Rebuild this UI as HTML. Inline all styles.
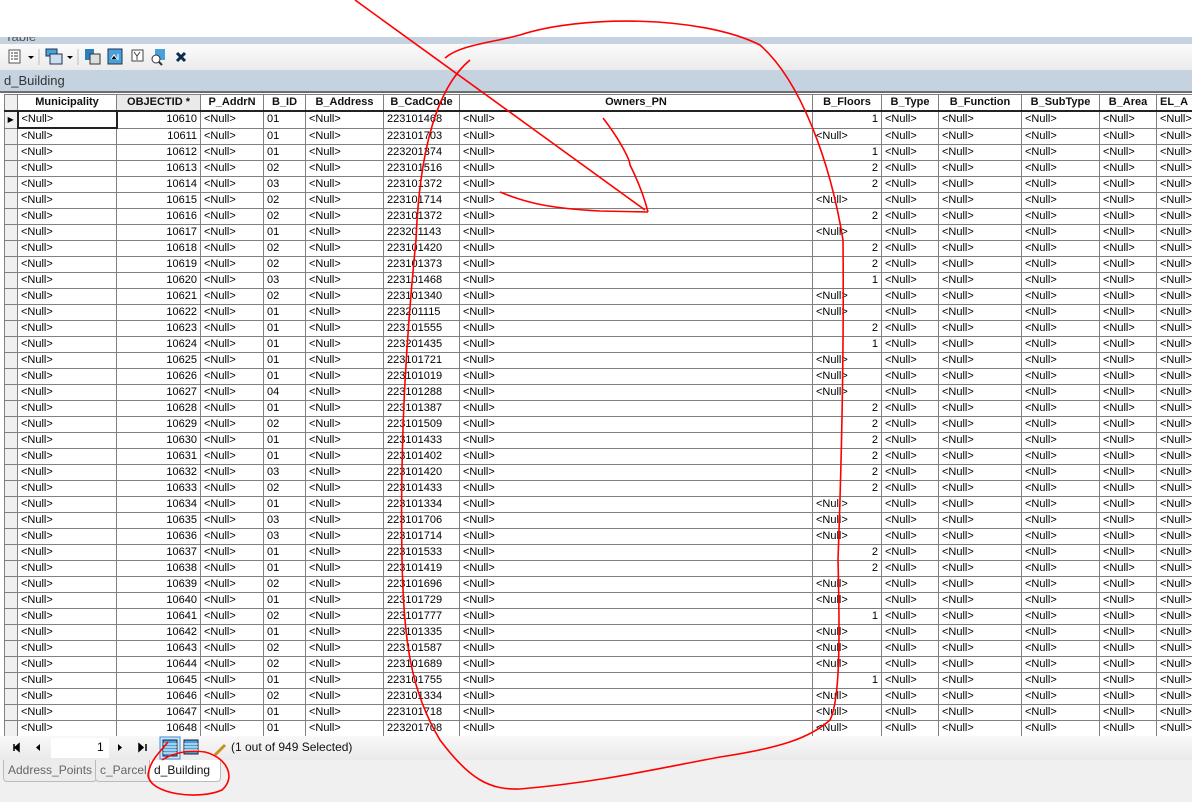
<!DOCTYPE html>
<html><head><meta charset="utf-8"><style>
body{margin:0;width:1192px;height:802px;overflow:hidden;background:#f0f0f0;font-family:"Liberation Sans",sans-serif;position:relative}
.top{position:absolute;left:0;top:0;width:1192px;height:37px;background:#fff}
.tb{position:absolute;left:0;top:37px;width:1192px;height:7px;background:#c5d2e0;overflow:hidden}
.tb span{position:absolute;left:5px;top:-8px;font-size:13px;color:#555}
.tool{position:absolute;left:0;top:44px;width:1192px;height:26px;background:linear-gradient(#fbfbfb,#ebebeb)}
.title{position:absolute;left:0;top:70px;width:1192px;height:21px;background:#c5d2e0;font-size:13px;color:#333}
.title span{position:absolute;left:4px;top:3px}
.grid{position:absolute;left:0;top:91px;width:1192px;height:645px;background:#fff;border-top:2px solid #6e6e6e;overflow:hidden}
table{position:absolute;left:4px;top:1px;width:1212px;border-collapse:collapse;table-layout:fixed;font-size:11px;color:#000}
td,th{border:1px solid #808080;height:15px;padding:0 3px;white-space:nowrap;overflow:hidden;line-height:15px}
th{font-weight:bold;color:#111;background:#fff;border-bottom:2px solid #222}
td.r{text-align:right}
td.s,th.s{background:#f0f0f0;padding:0}
.foot{position:absolute;left:0;top:736px;width:1192px;height:24px;background:linear-gradient(#f8f8f8,#eaeaea);font-size:12px}
.tabs{position:absolute;left:0;top:760px;width:1192px;height:22px;background:#f0f0f0}
.tab{position:absolute;top:0;height:21px;border:1px solid #bbb;border-top:none;border-radius:0 0 4px 4px;font-size:12px;color:#666;line-height:21px;padding:0 4px;background:#ececec;white-space:nowrap}
</style></head><body>
<div class="top"></div>
<div class="tb"><span>Table</span></div>
<div class="tool">
<svg width="200" height="26" style="position:absolute;left:0;top:0">
<rect x="9" y="6" width="11" height="13" fill="#fff" stroke="#555"/><path d="M11 9h2M11 12h2M11 15h2M14 9h4M14 12h4M14 15h4" stroke="#333"/>
<path d="M28 12l3 3 3-3z" fill="#000"/><line x1="39" y1="5" x2="39" y2="21" stroke="#bbb"/>
<rect x="46" y="5" width="11" height="7" fill="#4aa0d8" stroke="#235"/><rect x="50" y="10" width="12" height="10" fill="#cde" stroke="#235"/>
<path d="M67 12l3 3 3-3z" fill="#000"/><line x1="78" y1="5" x2="78" y2="21" stroke="#bbb"/>
<rect x="85" y="5" width="9" height="11" fill="#2a7fc0"/><rect x="90" y="10" width="10" height="10" fill="#ddd" stroke="#333"/>
<rect x="108" y="5" width="14" height="15" fill="#4aa0d8" stroke="#235"/><path d="M111 15l3-4 3 4M118 10v6" stroke="#fff"/>
<rect x="132" y="6" width="11" height="11" fill="#fff" stroke="#444"/><path d="M134 8l3 4 3-4M137 12v4" stroke="#444" fill="none"/>
<rect x="155" y="5" width="10" height="11" fill="#4aa0d8"/><circle cx="156" cy="15" r="4" fill="#fff" stroke="#333"/><path d="M159 18l3 3" stroke="#333" stroke-width="2"/>
<path d="M177 9l8 8M185 9l-8 8" stroke="#0b2a50" stroke-width="3"/>
</svg></div>
<div class="title"><span>d_Building</span></div>
<div class="grid"><table>
<colgroup><col style="width:13px"><col style="width:99px"><col style="width:84px"><col style="width:63px"><col style="width:42px"><col style="width:78px"><col style="width:76px"><col style="width:353px"><col style="width:69px"><col style="width:57px"><col style="width:83px"><col style="width:78px"><col style="width:57px"><col style="width:60px"></colgroup>
<tr><th class="s"></th><th>Municipality</th><th style="background:#eaeaea">OBJECTID *</th><th>P_AddrN</th><th>B_ID</th><th>B_Address</th><th>B_CadCode</th><th>Owners_PN</th><th>B_Floors</th><th>B_Type</th><th>B_Function</th><th>B_SubType</th><th>B_Area</th><th style="text-align:left">EL_A</th></tr>
<tr><td class="s" style="font-size:8px;text-align:center">&#9654;</td><td style="border:2px solid #222">&lt;Null&gt;</td><td class="r">10610</td><td>&lt;Null&gt;</td><td>01</td><td>&lt;Null&gt;</td><td>223101468</td><td>&lt;Null&gt;</td><td class="r">1</td><td>&lt;Null&gt;</td><td>&lt;Null&gt;</td><td>&lt;Null&gt;</td><td>&lt;Null&gt;</td><td>&lt;Null&gt;</td></tr>
<tr><td class="s"></td><td>&lt;Null&gt;</td><td class="r">10611</td><td>&lt;Null&gt;</td><td>01</td><td>&lt;Null&gt;</td><td>223101703</td><td>&lt;Null&gt;</td><td>&lt;Null&gt;</td><td>&lt;Null&gt;</td><td>&lt;Null&gt;</td><td>&lt;Null&gt;</td><td>&lt;Null&gt;</td><td>&lt;Null&gt;</td></tr>
<tr><td class="s"></td><td>&lt;Null&gt;</td><td class="r">10612</td><td>&lt;Null&gt;</td><td>01</td><td>&lt;Null&gt;</td><td>223201374</td><td>&lt;Null&gt;</td><td class="r">1</td><td>&lt;Null&gt;</td><td>&lt;Null&gt;</td><td>&lt;Null&gt;</td><td>&lt;Null&gt;</td><td>&lt;Null&gt;</td></tr>
<tr><td class="s"></td><td>&lt;Null&gt;</td><td class="r">10613</td><td>&lt;Null&gt;</td><td>02</td><td>&lt;Null&gt;</td><td>223101516</td><td>&lt;Null&gt;</td><td class="r">2</td><td>&lt;Null&gt;</td><td>&lt;Null&gt;</td><td>&lt;Null&gt;</td><td>&lt;Null&gt;</td><td>&lt;Null&gt;</td></tr>
<tr><td class="s"></td><td>&lt;Null&gt;</td><td class="r">10614</td><td>&lt;Null&gt;</td><td>03</td><td>&lt;Null&gt;</td><td>223101372</td><td>&lt;Null&gt;</td><td class="r">2</td><td>&lt;Null&gt;</td><td>&lt;Null&gt;</td><td>&lt;Null&gt;</td><td>&lt;Null&gt;</td><td>&lt;Null&gt;</td></tr>
<tr><td class="s"></td><td>&lt;Null&gt;</td><td class="r">10615</td><td>&lt;Null&gt;</td><td>02</td><td>&lt;Null&gt;</td><td>223101714</td><td>&lt;Null&gt;</td><td>&lt;Null&gt;</td><td>&lt;Null&gt;</td><td>&lt;Null&gt;</td><td>&lt;Null&gt;</td><td>&lt;Null&gt;</td><td>&lt;Null&gt;</td></tr>
<tr><td class="s"></td><td>&lt;Null&gt;</td><td class="r">10616</td><td>&lt;Null&gt;</td><td>02</td><td>&lt;Null&gt;</td><td>223101372</td><td>&lt;Null&gt;</td><td class="r">2</td><td>&lt;Null&gt;</td><td>&lt;Null&gt;</td><td>&lt;Null&gt;</td><td>&lt;Null&gt;</td><td>&lt;Null&gt;</td></tr>
<tr><td class="s"></td><td>&lt;Null&gt;</td><td class="r">10617</td><td>&lt;Null&gt;</td><td>01</td><td>&lt;Null&gt;</td><td>223201143</td><td>&lt;Null&gt;</td><td>&lt;Null&gt;</td><td>&lt;Null&gt;</td><td>&lt;Null&gt;</td><td>&lt;Null&gt;</td><td>&lt;Null&gt;</td><td>&lt;Null&gt;</td></tr>
<tr><td class="s"></td><td>&lt;Null&gt;</td><td class="r">10618</td><td>&lt;Null&gt;</td><td>02</td><td>&lt;Null&gt;</td><td>223101420</td><td>&lt;Null&gt;</td><td class="r">2</td><td>&lt;Null&gt;</td><td>&lt;Null&gt;</td><td>&lt;Null&gt;</td><td>&lt;Null&gt;</td><td>&lt;Null&gt;</td></tr>
<tr><td class="s"></td><td>&lt;Null&gt;</td><td class="r">10619</td><td>&lt;Null&gt;</td><td>02</td><td>&lt;Null&gt;</td><td>223101373</td><td>&lt;Null&gt;</td><td class="r">2</td><td>&lt;Null&gt;</td><td>&lt;Null&gt;</td><td>&lt;Null&gt;</td><td>&lt;Null&gt;</td><td>&lt;Null&gt;</td></tr>
<tr><td class="s"></td><td>&lt;Null&gt;</td><td class="r">10620</td><td>&lt;Null&gt;</td><td>03</td><td>&lt;Null&gt;</td><td>223101468</td><td>&lt;Null&gt;</td><td class="r">1</td><td>&lt;Null&gt;</td><td>&lt;Null&gt;</td><td>&lt;Null&gt;</td><td>&lt;Null&gt;</td><td>&lt;Null&gt;</td></tr>
<tr><td class="s"></td><td>&lt;Null&gt;</td><td class="r">10621</td><td>&lt;Null&gt;</td><td>02</td><td>&lt;Null&gt;</td><td>223101340</td><td>&lt;Null&gt;</td><td>&lt;Null&gt;</td><td>&lt;Null&gt;</td><td>&lt;Null&gt;</td><td>&lt;Null&gt;</td><td>&lt;Null&gt;</td><td>&lt;Null&gt;</td></tr>
<tr><td class="s"></td><td>&lt;Null&gt;</td><td class="r">10622</td><td>&lt;Null&gt;</td><td>01</td><td>&lt;Null&gt;</td><td>223201115</td><td>&lt;Null&gt;</td><td>&lt;Null&gt;</td><td>&lt;Null&gt;</td><td>&lt;Null&gt;</td><td>&lt;Null&gt;</td><td>&lt;Null&gt;</td><td>&lt;Null&gt;</td></tr>
<tr><td class="s"></td><td>&lt;Null&gt;</td><td class="r">10623</td><td>&lt;Null&gt;</td><td>01</td><td>&lt;Null&gt;</td><td>223101555</td><td>&lt;Null&gt;</td><td class="r">2</td><td>&lt;Null&gt;</td><td>&lt;Null&gt;</td><td>&lt;Null&gt;</td><td>&lt;Null&gt;</td><td>&lt;Null&gt;</td></tr>
<tr><td class="s"></td><td>&lt;Null&gt;</td><td class="r">10624</td><td>&lt;Null&gt;</td><td>01</td><td>&lt;Null&gt;</td><td>223201435</td><td>&lt;Null&gt;</td><td class="r">1</td><td>&lt;Null&gt;</td><td>&lt;Null&gt;</td><td>&lt;Null&gt;</td><td>&lt;Null&gt;</td><td>&lt;Null&gt;</td></tr>
<tr><td class="s"></td><td>&lt;Null&gt;</td><td class="r">10625</td><td>&lt;Null&gt;</td><td>01</td><td>&lt;Null&gt;</td><td>223101721</td><td>&lt;Null&gt;</td><td>&lt;Null&gt;</td><td>&lt;Null&gt;</td><td>&lt;Null&gt;</td><td>&lt;Null&gt;</td><td>&lt;Null&gt;</td><td>&lt;Null&gt;</td></tr>
<tr><td class="s"></td><td>&lt;Null&gt;</td><td class="r">10626</td><td>&lt;Null&gt;</td><td>01</td><td>&lt;Null&gt;</td><td>223101019</td><td>&lt;Null&gt;</td><td>&lt;Null&gt;</td><td>&lt;Null&gt;</td><td>&lt;Null&gt;</td><td>&lt;Null&gt;</td><td>&lt;Null&gt;</td><td>&lt;Null&gt;</td></tr>
<tr><td class="s"></td><td>&lt;Null&gt;</td><td class="r">10627</td><td>&lt;Null&gt;</td><td>04</td><td>&lt;Null&gt;</td><td>223101288</td><td>&lt;Null&gt;</td><td>&lt;Null&gt;</td><td>&lt;Null&gt;</td><td>&lt;Null&gt;</td><td>&lt;Null&gt;</td><td>&lt;Null&gt;</td><td>&lt;Null&gt;</td></tr>
<tr><td class="s"></td><td>&lt;Null&gt;</td><td class="r">10628</td><td>&lt;Null&gt;</td><td>01</td><td>&lt;Null&gt;</td><td>223101387</td><td>&lt;Null&gt;</td><td class="r">2</td><td>&lt;Null&gt;</td><td>&lt;Null&gt;</td><td>&lt;Null&gt;</td><td>&lt;Null&gt;</td><td>&lt;Null&gt;</td></tr>
<tr><td class="s"></td><td>&lt;Null&gt;</td><td class="r">10629</td><td>&lt;Null&gt;</td><td>02</td><td>&lt;Null&gt;</td><td>223101509</td><td>&lt;Null&gt;</td><td class="r">2</td><td>&lt;Null&gt;</td><td>&lt;Null&gt;</td><td>&lt;Null&gt;</td><td>&lt;Null&gt;</td><td>&lt;Null&gt;</td></tr>
<tr><td class="s"></td><td>&lt;Null&gt;</td><td class="r">10630</td><td>&lt;Null&gt;</td><td>01</td><td>&lt;Null&gt;</td><td>223101433</td><td>&lt;Null&gt;</td><td class="r">2</td><td>&lt;Null&gt;</td><td>&lt;Null&gt;</td><td>&lt;Null&gt;</td><td>&lt;Null&gt;</td><td>&lt;Null&gt;</td></tr>
<tr><td class="s"></td><td>&lt;Null&gt;</td><td class="r">10631</td><td>&lt;Null&gt;</td><td>01</td><td>&lt;Null&gt;</td><td>223101402</td><td>&lt;Null&gt;</td><td class="r">2</td><td>&lt;Null&gt;</td><td>&lt;Null&gt;</td><td>&lt;Null&gt;</td><td>&lt;Null&gt;</td><td>&lt;Null&gt;</td></tr>
<tr><td class="s"></td><td>&lt;Null&gt;</td><td class="r">10632</td><td>&lt;Null&gt;</td><td>03</td><td>&lt;Null&gt;</td><td>223101420</td><td>&lt;Null&gt;</td><td class="r">2</td><td>&lt;Null&gt;</td><td>&lt;Null&gt;</td><td>&lt;Null&gt;</td><td>&lt;Null&gt;</td><td>&lt;Null&gt;</td></tr>
<tr><td class="s"></td><td>&lt;Null&gt;</td><td class="r">10633</td><td>&lt;Null&gt;</td><td>02</td><td>&lt;Null&gt;</td><td>223101433</td><td>&lt;Null&gt;</td><td class="r">2</td><td>&lt;Null&gt;</td><td>&lt;Null&gt;</td><td>&lt;Null&gt;</td><td>&lt;Null&gt;</td><td>&lt;Null&gt;</td></tr>
<tr><td class="s"></td><td>&lt;Null&gt;</td><td class="r">10634</td><td>&lt;Null&gt;</td><td>01</td><td>&lt;Null&gt;</td><td>223101334</td><td>&lt;Null&gt;</td><td>&lt;Null&gt;</td><td>&lt;Null&gt;</td><td>&lt;Null&gt;</td><td>&lt;Null&gt;</td><td>&lt;Null&gt;</td><td>&lt;Null&gt;</td></tr>
<tr><td class="s"></td><td>&lt;Null&gt;</td><td class="r">10635</td><td>&lt;Null&gt;</td><td>03</td><td>&lt;Null&gt;</td><td>223101706</td><td>&lt;Null&gt;</td><td>&lt;Null&gt;</td><td>&lt;Null&gt;</td><td>&lt;Null&gt;</td><td>&lt;Null&gt;</td><td>&lt;Null&gt;</td><td>&lt;Null&gt;</td></tr>
<tr><td class="s"></td><td>&lt;Null&gt;</td><td class="r">10636</td><td>&lt;Null&gt;</td><td>03</td><td>&lt;Null&gt;</td><td>223101714</td><td>&lt;Null&gt;</td><td>&lt;Null&gt;</td><td>&lt;Null&gt;</td><td>&lt;Null&gt;</td><td>&lt;Null&gt;</td><td>&lt;Null&gt;</td><td>&lt;Null&gt;</td></tr>
<tr><td class="s"></td><td>&lt;Null&gt;</td><td class="r">10637</td><td>&lt;Null&gt;</td><td>01</td><td>&lt;Null&gt;</td><td>223101533</td><td>&lt;Null&gt;</td><td class="r">2</td><td>&lt;Null&gt;</td><td>&lt;Null&gt;</td><td>&lt;Null&gt;</td><td>&lt;Null&gt;</td><td>&lt;Null&gt;</td></tr>
<tr><td class="s"></td><td>&lt;Null&gt;</td><td class="r">10638</td><td>&lt;Null&gt;</td><td>01</td><td>&lt;Null&gt;</td><td>223101419</td><td>&lt;Null&gt;</td><td class="r">2</td><td>&lt;Null&gt;</td><td>&lt;Null&gt;</td><td>&lt;Null&gt;</td><td>&lt;Null&gt;</td><td>&lt;Null&gt;</td></tr>
<tr><td class="s"></td><td>&lt;Null&gt;</td><td class="r">10639</td><td>&lt;Null&gt;</td><td>02</td><td>&lt;Null&gt;</td><td>223101696</td><td>&lt;Null&gt;</td><td>&lt;Null&gt;</td><td>&lt;Null&gt;</td><td>&lt;Null&gt;</td><td>&lt;Null&gt;</td><td>&lt;Null&gt;</td><td>&lt;Null&gt;</td></tr>
<tr><td class="s"></td><td>&lt;Null&gt;</td><td class="r">10640</td><td>&lt;Null&gt;</td><td>01</td><td>&lt;Null&gt;</td><td>223101729</td><td>&lt;Null&gt;</td><td>&lt;Null&gt;</td><td>&lt;Null&gt;</td><td>&lt;Null&gt;</td><td>&lt;Null&gt;</td><td>&lt;Null&gt;</td><td>&lt;Null&gt;</td></tr>
<tr><td class="s"></td><td>&lt;Null&gt;</td><td class="r">10641</td><td>&lt;Null&gt;</td><td>02</td><td>&lt;Null&gt;</td><td>223101777</td><td>&lt;Null&gt;</td><td class="r">1</td><td>&lt;Null&gt;</td><td>&lt;Null&gt;</td><td>&lt;Null&gt;</td><td>&lt;Null&gt;</td><td>&lt;Null&gt;</td></tr>
<tr><td class="s"></td><td>&lt;Null&gt;</td><td class="r">10642</td><td>&lt;Null&gt;</td><td>01</td><td>&lt;Null&gt;</td><td>223101335</td><td>&lt;Null&gt;</td><td>&lt;Null&gt;</td><td>&lt;Null&gt;</td><td>&lt;Null&gt;</td><td>&lt;Null&gt;</td><td>&lt;Null&gt;</td><td>&lt;Null&gt;</td></tr>
<tr><td class="s"></td><td>&lt;Null&gt;</td><td class="r">10643</td><td>&lt;Null&gt;</td><td>02</td><td>&lt;Null&gt;</td><td>223101587</td><td>&lt;Null&gt;</td><td>&lt;Null&gt;</td><td>&lt;Null&gt;</td><td>&lt;Null&gt;</td><td>&lt;Null&gt;</td><td>&lt;Null&gt;</td><td>&lt;Null&gt;</td></tr>
<tr><td class="s"></td><td>&lt;Null&gt;</td><td class="r">10644</td><td>&lt;Null&gt;</td><td>02</td><td>&lt;Null&gt;</td><td>223101689</td><td>&lt;Null&gt;</td><td>&lt;Null&gt;</td><td>&lt;Null&gt;</td><td>&lt;Null&gt;</td><td>&lt;Null&gt;</td><td>&lt;Null&gt;</td><td>&lt;Null&gt;</td></tr>
<tr><td class="s"></td><td>&lt;Null&gt;</td><td class="r">10645</td><td>&lt;Null&gt;</td><td>01</td><td>&lt;Null&gt;</td><td>223101755</td><td>&lt;Null&gt;</td><td class="r">1</td><td>&lt;Null&gt;</td><td>&lt;Null&gt;</td><td>&lt;Null&gt;</td><td>&lt;Null&gt;</td><td>&lt;Null&gt;</td></tr>
<tr><td class="s"></td><td>&lt;Null&gt;</td><td class="r">10646</td><td>&lt;Null&gt;</td><td>02</td><td>&lt;Null&gt;</td><td>223101334</td><td>&lt;Null&gt;</td><td>&lt;Null&gt;</td><td>&lt;Null&gt;</td><td>&lt;Null&gt;</td><td>&lt;Null&gt;</td><td>&lt;Null&gt;</td><td>&lt;Null&gt;</td></tr>
<tr><td class="s"></td><td>&lt;Null&gt;</td><td class="r">10647</td><td>&lt;Null&gt;</td><td>01</td><td>&lt;Null&gt;</td><td>223101718</td><td>&lt;Null&gt;</td><td>&lt;Null&gt;</td><td>&lt;Null&gt;</td><td>&lt;Null&gt;</td><td>&lt;Null&gt;</td><td>&lt;Null&gt;</td><td>&lt;Null&gt;</td></tr>
<tr><td class="s"></td><td>&lt;Null&gt;</td><td class="r">10648</td><td>&lt;Null&gt;</td><td>01</td><td>&lt;Null&gt;</td><td>223201708</td><td>&lt;Null&gt;</td><td>&lt;Null&gt;</td><td>&lt;Null&gt;</td><td>&lt;Null&gt;</td><td>&lt;Null&gt;</td><td>&lt;Null&gt;</td><td>&lt;Null&gt;</td></tr>
</table></div>
<div class="foot">
<div style="position:absolute;left:51px;top:2px;width:58px;height:20px;background:#fff"></div>
<svg width="240" height="24" style="position:absolute;left:0;top:0">
<path d="M14 8v7M19 8l-4 3.5 4 3.5z" stroke="#000" fill="#000" stroke-width="1.5"/>
<path d="M40 8l-4 3.5 4 3.5z" fill="#000"/>
<path d="M118 8l4 3.5-4 3.5z" fill="#000"/>
<path d="M139 8l4 3.5-4 3.5zM146 8v7" fill="#000" stroke="#000" stroke-width="1.5"/>
<rect x="160" y="1" width="20" height="22" fill="#cfe6f8" stroke="#3a8ee0"/>
<rect x="163" y="4" width="14" height="16" fill="#4aa0d8" stroke="#223"/><path d="M163 8h14M163 11h14M163 14h14M163 17h14" stroke="#fff"/>
<rect x="184" y="4" width="14" height="14" fill="#4aa0d8" stroke="#223"/><path d="M184 8h14M184 11h14M184 14h14" stroke="#fff"/>
<path d="M215 19l10-10" stroke="#c89020" stroke-width="3"/>
</svg>
<span style="position:absolute;left:97px;top:4px">1</span>
<span style="position:absolute;left:231px;top:4px;color:#111">(1 out of 949 Selected)</span>
</div>
<div class="tabs">
<div class="tab" style="left:3px;width:84px">Address_Points</div>
<div class="tab" style="left:95px;width:47px">c_Parcel</div>
<div class="tab" style="left:149px;width:62px;background:#fff;color:#111">d_Building</div>
</div>
<svg width="1192" height="802" style="position:absolute;left:0;top:0" fill="none" stroke="#f00" stroke-width="1.6">
<path d="M355 0 L645 210"/>
<path d="M500 192 C520 200 540 208 600 211 L648 212"/>
<path d="M603 118 C620 140 630 160 630 165 C640 185 645 200 648 212"/>
<path d="M470 60 C440 85 420 140 416 240 C405 350 400 450 402 560 C404 640 410 690 440 740 C470 780 490 790 520 789 C600 782 650 770 720 757 C780 748 810 738 830 720 C840 700 840 640 838 560 C842 450 844 350 843 240 C830 160 800 80 760 45 C700 15 580 15 520 35 C490 43 460 45 445 58"/>
<path d="M168 742 C160 752 150 760 148 775 C150 795 200 800 222 790 C236 778 228 758 205 752 C190 750 175 752 162 760"/>
</svg>
</body></html>
